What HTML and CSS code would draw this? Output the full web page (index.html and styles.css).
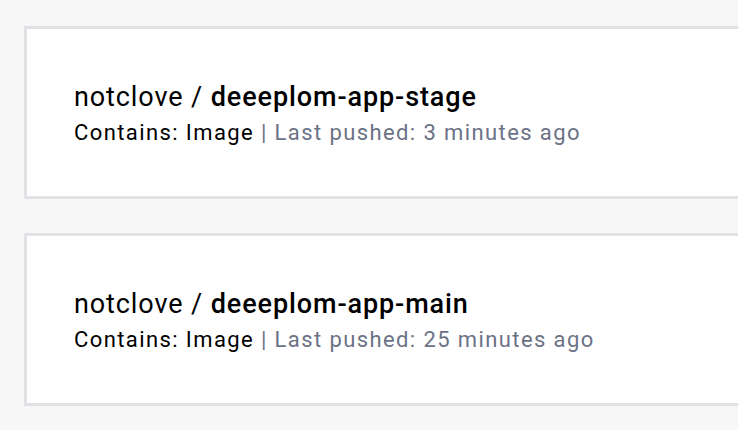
FILE: index.html
```html
<!DOCTYPE html>
<html>
<head>
<meta charset="utf-8">
<link rel="stylesheet" href="styles.css">
</head>
<body>
<div class="list">
  <div class="card">
    <div class="title">notclove / <strong>deeeplom-app-stage</strong></div>
    <div class="meta">Contains: Image <span class="muted">| Last pushed: 3 minutes ago</span></div>
  </div>
  <div class="card">
    <div class="title">notclove / <strong>deeeplom-app-main</strong></div>
    <div class="meta">Contains: Image <span class="muted">| Last pushed: 25 minutes ago</span></div>
  </div>
</div>
</body>
</html>
```

FILE: styles.css
```css
html, body {
  margin: 0;
  padding: 0;
  background: #f7f7f7;
  font-family: Roboto, "Liberation Sans", sans-serif;
  color: #000;
  overflow: hidden;
}
.list {
  display: flex;
  flex-direction: column;
  gap: 34px;
  padding: 26px 0 0 24px;
}
.card {
  background: #fff;
  border: 3px solid #e1e1e6;
  border-right: none;
  box-sizing: border-box;
  height: 173px;
  padding: 52px 0 0 47px;
}
.title {
  font-size: 27px;
  line-height: 32px;
  letter-spacing: 0.9px;
  white-space: nowrap;
}
.title strong {
  font-weight: 500;
}
.meta {
  margin-top: 6px;
  font-size: 22px;
  line-height: 28px;
  letter-spacing: 1.4px;
  white-space: nowrap;
}
.muted {
  color: #6b7286;
}
```
